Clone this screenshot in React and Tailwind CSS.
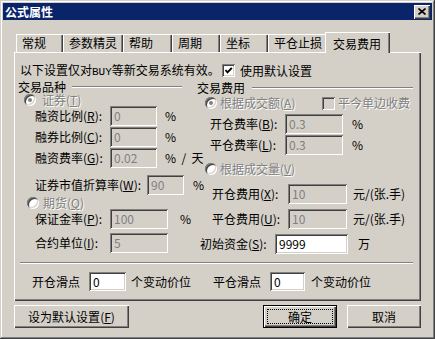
import React from "react";

const sunken =
  "shadow-[inset_1px_1px_#808080,inset_-1px_-1px_#ffffff,inset_2px_2px_#404040,inset_-2px_-2px_#d4d0c8]";
const raised =
  "shadow-[inset_1px_1px_#ffffff,inset_-1px_-1px_#404040,inset_-2px_-2px_#808080]";
const grayText = "text-[#808080] [text-shadow:1px_1px_0_#ffffff]";

function Mn({ text, k, colon = true }) {
  return (
    <>
      {text}(<u>{k}</u>){colon ? ":" : ""}
    </>
  );
}

function Edit({ w, value, disabled = true, h = "h-[20px]" }) {
  return (
    <div
      className={`${w} ${h} ${sunken} ${
        disabled ? "bg-[#d4d0c8] text-[#808080]" : "bg-white text-black"
      } flex items-center pl-[4px] shrink-0`}
    >
      {value}
    </div>
  );
}

function Field({ className, label, labelW, inputW, value, unit, unitClass, disabled = true }) {
  return (
    <div className={`flex items-center h-[20px] ${className}`}>
      <span className={`${labelW} shrink-0 whitespace-nowrap`}>{label}</span>
      <Edit w={inputW} value={value} disabled={disabled} />
      {unit && <span className={`${unitClass} whitespace-pre`}>{unit}</span>}
    </div>
  );
}

function Radio({ checked }) {
  return (
    <div
      className={`w-[12px] h-[12px] rounded-full bg-white shrink-0 flex items-center justify-center ${sunken}`}
    >
      {checked && <div className="w-[4px] h-[4px] rounded-full bg-[#808080]" />}
    </div>
  );
}

function Check({ checked, disabled }) {
  return (
    <div
      className={`w-[13px] h-[13px] shrink-0 ${sunken} ${
        disabled ? "bg-[#d4d0c8]" : "bg-white"
      } flex items-center justify-center`}
    >
      {checked && (
        <svg width="9" height="9" viewBox="0 0 9 9">
          <path d="M1.5 4 L3.5 6.3 L7.8 1.8" fill="none" stroke="#000" strokeWidth="1.9" />
        </svg>
      )}
    </div>
  );
}

function GroupTitle({ text, lineClass }) {
  return (
    <div className="flex items-center h-[12px]">
      <span className="shrink-0">{text}</span>
      <div className={`h-[2px] border-t border-t-[#808080] border-b border-b-white ${lineClass}`} />
    </div>
  );
}

function Tab({ label, w }) {
  return (
    <div
      className={`${w} h-[18px] flex items-center pl-[6px] shrink-0 shadow-[inset_1px_1px_#ffffff,inset_-1px_0_#404040,inset_-2px_0_#808080]`}
    >
      {label}
    </div>
  );
}

export default function App() {
  return (
    <div className="w-[435px] h-[339px] bg-[#d4d0c8] p-[3px] flex flex-col text-black text-[12px] leading-none font-['Noto_Sans_CJK_SC',sans-serif] shadow-[inset_-1px_-1px_#404040,inset_1px_1px_#d4d0c8,inset_-2px_-2px_#808080,inset_2px_2px_#ffffff]">
      {/* title bar */}
      <div className="h-[17px] bg-[#0a246a] flex items-center justify-between pl-[2px] pr-[2px]">
        <span className="text-white font-bold">公式属性</span>
        <div className={`w-[16px] h-[14px] bg-[#d4d0c8] flex items-center justify-center ${raised}`}>
          <svg width="8" height="7" viewBox="0 0 8 7">
            <path d="M0.5 0.5 L7.5 6.5 M7.5 0.5 L0.5 6.5" stroke="#000" strokeWidth="1.6" />
          </svg>
        </div>
      </div>

      <div className="px-[11px] flex flex-col">
        {/* tabs */}
        <div className="mt-[12px] h-[20px] flex items-end pl-[2px] relative z-10">
          <Tab label="常规" w="w-[47px]" />
          <Tab label="参数精灵" w="w-[60px]" />
          <Tab label="帮助" w="w-[49px]" />
          <Tab label="周期" w="w-[48px]" />
          <Tab label="坐标" w="w-[48px]" />
          <Tab label="平仓止损" w="w-[59px]" />
          <div className="w-[65px] h-[21px] -ml-[2px] -mb-[1px] pl-[8px] pt-[2px] flex items-center bg-[#d4d0c8] shrink-0 shadow-[inset_1px_1px_#ffffff,inset_-1px_0_#404040,inset_-2px_0_#808080]">
            交易费用
          </div>
        </div>

        {/* panel */}
        <div className="w-[407px] h-[249px] flex flex-col shadow-[inset_1px_1px_#ffffff,inset_-1px_-1px_#404040,inset_-2px_-2px_#808080]">
          <div className="mt-[12px] h-[13px] pl-[6px] flex items-center">
            <span className="w-[202px] shrink-0 whitespace-nowrap">
              以下设置仅对<span className="font-['Liberation_Mono',monospace] text-[11px]">BUY</span>等新交易系统有效。
            </span>
            <Check checked />
            <span className="ml-[5px]">使用默认设置</span>
          </div>

          <div className="mt-[4px] h-[173px] flex">
            {/* left column */}
            <div className="ml-[4px] w-[179px] flex flex-col">
              <GroupTitle text="交易品种" lineClass="ml-[6px] w-[110px]" />
              <div className="mt-[1px] h-[12px] flex items-center ml-[6px]">
                <Radio checked />
                <span className={`ml-[6px] ${grayText}`}>
                  <Mn text="证券" k="T" colon={false} />
                </span>
              </div>
              <Field
                className="ml-[17px]"
                label={<Mn text="融资比例" k="R" />}
                labelW="w-[75px]"
                inputW="w-[47px]"
                value="0"
                unit="%"
                unitClass="ml-[8px]"
              />
              <Field
                className="ml-[17px] mt-[1px]"
                label={<Mn text="融券比例" k="C" />}
                labelW="w-[75px]"
                inputW="w-[47px]"
                value="0"
                unit="%"
                unitClass="ml-[8px]"
              />
              <Field
                className="ml-[17px] mt-[1px]"
                label={<Mn text="融资费率" k="G" />}
                labelW="w-[75px]"
                inputW="w-[47px]"
                value="0.02"
                unit="%  /  天"
                unitClass="ml-[8px]"
              />
              <Field
                className="ml-[17px] mt-[7px]"
                label={<Mn text="证券市值折算率" k="W" />}
                labelW="w-[112px]"
                inputW="w-[37px]"
                value="90"
                unit="%"
                unitClass="ml-[9px]"
              />
              <div className="mt-[2px] h-[12px] flex items-center ml-[9px]">
                <Radio />
                <span className={`ml-[4px] ${grayText}`}>
                  <Mn text="期货" k="Q" colon={false} />
                </span>
              </div>
              <Field
                className="ml-[17px]"
                label={<Mn text="保证金率" k="P" />}
                labelW="w-[75px]"
                inputW="w-[58px]"
                value="100"
                unit="%"
                unitClass="ml-[12px]"
              />
              <Field
                className="ml-[17px] mt-[4px]"
                label={<Mn text="合约单位" k="I" />}
                labelW="w-[75px]"
                inputW="w-[58px]"
                value="5"
              />
            </div>

            {/* right column */}
            <div className="flex-1 flex flex-col">
              <div className="mt-[1px]">
                <GroupTitle text="交易费用" lineClass="ml-[7px] w-[161px]" />
              </div>
              <div className="mt-[3px] h-[12px] flex items-center ml-[8px]">
                <Radio checked />
                <span className={`ml-[3px] w-[102px] shrink-0 ${grayText}`}>
                  <Mn text="根据成交额" k="A" colon={false} />
                </span>
                <Check disabled />
                <span className={`ml-[3px] ${grayText}`}>平今单边收费</span>
              </div>
              <Field
                className="ml-[13px] mt-[5px]"
                label={<Mn text="开仓费率" k="B" />}
                labelW="w-[75px]"
                inputW="w-[58px]"
                value="0.3"
                unit="%"
                unitClass="ml-[9px]"
              />
              <Field
                className="ml-[13px] mt-[1px]"
                label={<Mn text="平仓费率" k="L" />}
                labelW="w-[75px]"
                inputW="w-[58px]"
                value="0.3"
                unit="%"
                unitClass="ml-[9px]"
              />
              <div className="mt-[8px] h-[12px] flex items-center ml-[8px]">
                <Radio />
                <span className={`ml-[3px] ${grayText}`}>
                  <Mn text="根据成交量" k="V" colon={false} />
                </span>
              </div>
              <Field
                className="ml-[15px] mt-[9px]"
                label={<Mn text="开仓费用" k="X" />}
                labelW="w-[76px]"
                inputW="w-[59px]"
                value="10"
                unit="元/(张.手)"
                unitClass="ml-[6px]"
              />
              <Field
                className="ml-[15px] mt-[5px]"
                label={<Mn text="平仓费用" k="U" />}
                labelW="w-[76px]"
                inputW="w-[59px]"
                value="10"
                unit="元/(张.手)"
                unitClass="ml-[6px]"
              />
              <Field
                className="ml-[3px] mt-[5px]"
                label={<Mn text="初始资金" k="S" />}
                labelW="w-[75px]"
                inputW="w-[73px]"
                value="9999"
                disabled={false}
                unit="万"
                unitClass="ml-[10px]"
              />
            </div>
          </div>

          <div className="mt-[8px] ml-[6px] w-[393px] h-[2px] border-t border-t-[#808080] border-b border-b-white" />

          <div className="mt-[8px] h-[19px] ml-[18px] flex items-center">
            <span className="w-[57px] shrink-0">开仓滑点</span>
            <Edit w="w-[37px]" h="h-[19px]" value="0" disabled={false} />
            <span className="ml-[5px] w-[82px] shrink-0">个变动价位</span>
            <span className="w-[57px] shrink-0">平仓滑点</span>
            <Edit w="w-[35px]" h="h-[19px]" value="0" disabled={false} />
            <span className="ml-[6px]">个变动价位</span>
          </div>
        </div>

        {/* buttons */}
        <div className="mt-[4px] h-[23px] flex">
          <button className={`w-[115px] h-[23px] bg-[#d4d0c8] flex items-center justify-center ${raised}`}>
            <Mn text="设为默认设置" k="F" colon={false} />
          </button>
          <div className="flex-1" />
          <button className="w-[74px] h-[23px] bg-[#d4d0c8] flex items-center justify-center outline-1 outline-dotted outline-black -outline-offset-[5px] shadow-[inset_0_0_0_1px_#000000,inset_2px_2px_#ffffff,inset_-2px_-2px_#404040,inset_-3px_-3px_#808080]">
            确定
          </button>
          <button className={`ml-[10px] w-[74px] h-[23px] bg-[#d4d0c8] flex items-center justify-center ${raised}`}>
            取消
          </button>
        </div>
      </div>
    </div>
  );
}
